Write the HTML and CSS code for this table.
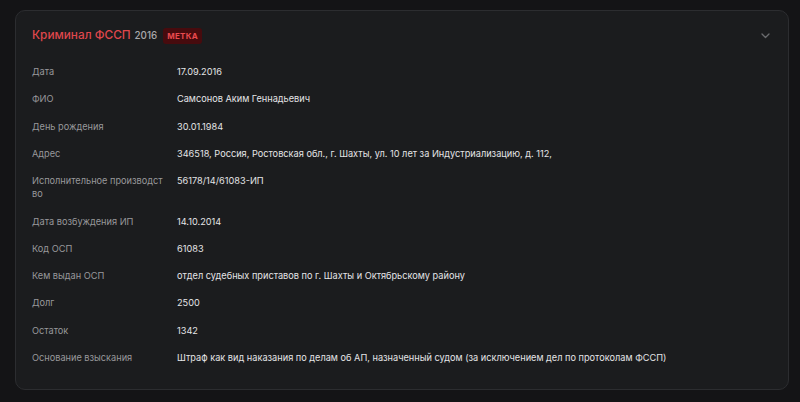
FILE: index.html
```html
<!DOCTYPE html>
<html lang="ru">
<head>
<meta charset="utf-8">
<link rel="stylesheet" href="styles.css">
</head>
<body>
<div class="card">
  <div class="head">
    <div class="title">
      <span class="name">Криминал ФССП</span>
      <span class="year">2016</span>
      <span class="badge">МЕТКА</span>
    </div>
    <svg class="chev" width="9" height="6" viewBox="0 0 9 6"><path d="M1 1l3.5 3.5L8 1" fill="none" stroke="#6a6b6e" stroke-width="1.3" stroke-linecap="round" stroke-linejoin="round"/></svg>
  </div>
  <div class="rows">
    <div class="row"><div class="k">Дата</div><div class="v">17.09.2016</div></div>
    <div class="row"><div class="k">ФИО</div><div class="v">Самсонов Аким Геннадьевич</div></div>
    <div class="row"><div class="k">День рождения</div><div class="v">30.01.1984</div></div>
    <div class="row"><div class="k">Адрес</div><div class="v">346518, Россия, Ростовская обл., г. Шахты, ул. 10 лет за Индустриализацию, д. 112,</div></div>
    <div class="row"><div class="k">Исполнительное производство</div><div class="v">56178/14/61083-ИП</div></div>
    <div class="row"><div class="k">Дата возбуждения ИП</div><div class="v">14.10.2014</div></div>
    <div class="row"><div class="k">Код ОСП</div><div class="v">61083</div></div>
    <div class="row"><div class="k">Кем выдан ОСП</div><div class="v">отдел судебных приставов по г. Шахты и Октябрьскому району</div></div>
    <div class="row"><div class="k">Долг</div><div class="v">2500</div></div>
    <div class="row"><div class="k">Остаток</div><div class="v">1342</div></div>
    <div class="row"><div class="k">Основание взыскания</div><div class="v">Штраф как вид наказания по делам об АП, назначенный судом (за исключением дел по протоколам ФССП)</div></div>
  </div>
</div>
</body>
</html>
```
FILE: styles.css
```css
html, body {
  margin: 0;
  padding: 0;
  background: #141416;
  font-family: Inter, "Noto Sans", sans-serif;
}
body {
  padding: 10px 11px 12px 15px;
}
.card {
  background: #1b1c1e;
  border: 1px solid #2c2d30;
  border-radius: 10px;
  padding: 15px 16px 19px 16px;
  box-sizing: border-box;
  height: 380px;
}
.head {
  display: flex;
  align-items: center;
  justify-content: space-between;
  height: 20px;
  margin-bottom: 12px;
}
.title {
  display: flex;
  align-items: baseline;
  gap: 4px;
}
.name {
  color: #df474c;
  font-size: 11.8px;
  font-weight: 500;
}
.year {
  color: #a8a8aa;
  font-size: 9.8px;
  font-weight: 500;
}
.badge {
  margin-left: 2px;
  background: #470b0e;
  color: #ea4a4f;
  font-size: 8px;
  line-height: 10px;
  font-weight: 700;
  padding: 3px 4px;
  border-radius: 3px;
  letter-spacing: 0.3px;
  align-self: center;
}
.chev {
  margin-right: 2px;
}
.rows {
  display: flex;
  flex-direction: column;
}
.row {
  display: grid;
  grid-template-columns: 133px 1fr;
  column-gap: 12px;
  padding: 7.15px 0;
  font-size: 9.2px;
  line-height: 13px;
}
.k {
  color: #98989b;
  word-break: break-all;
}
.v {
  color: #e4e4e6;
}
```
